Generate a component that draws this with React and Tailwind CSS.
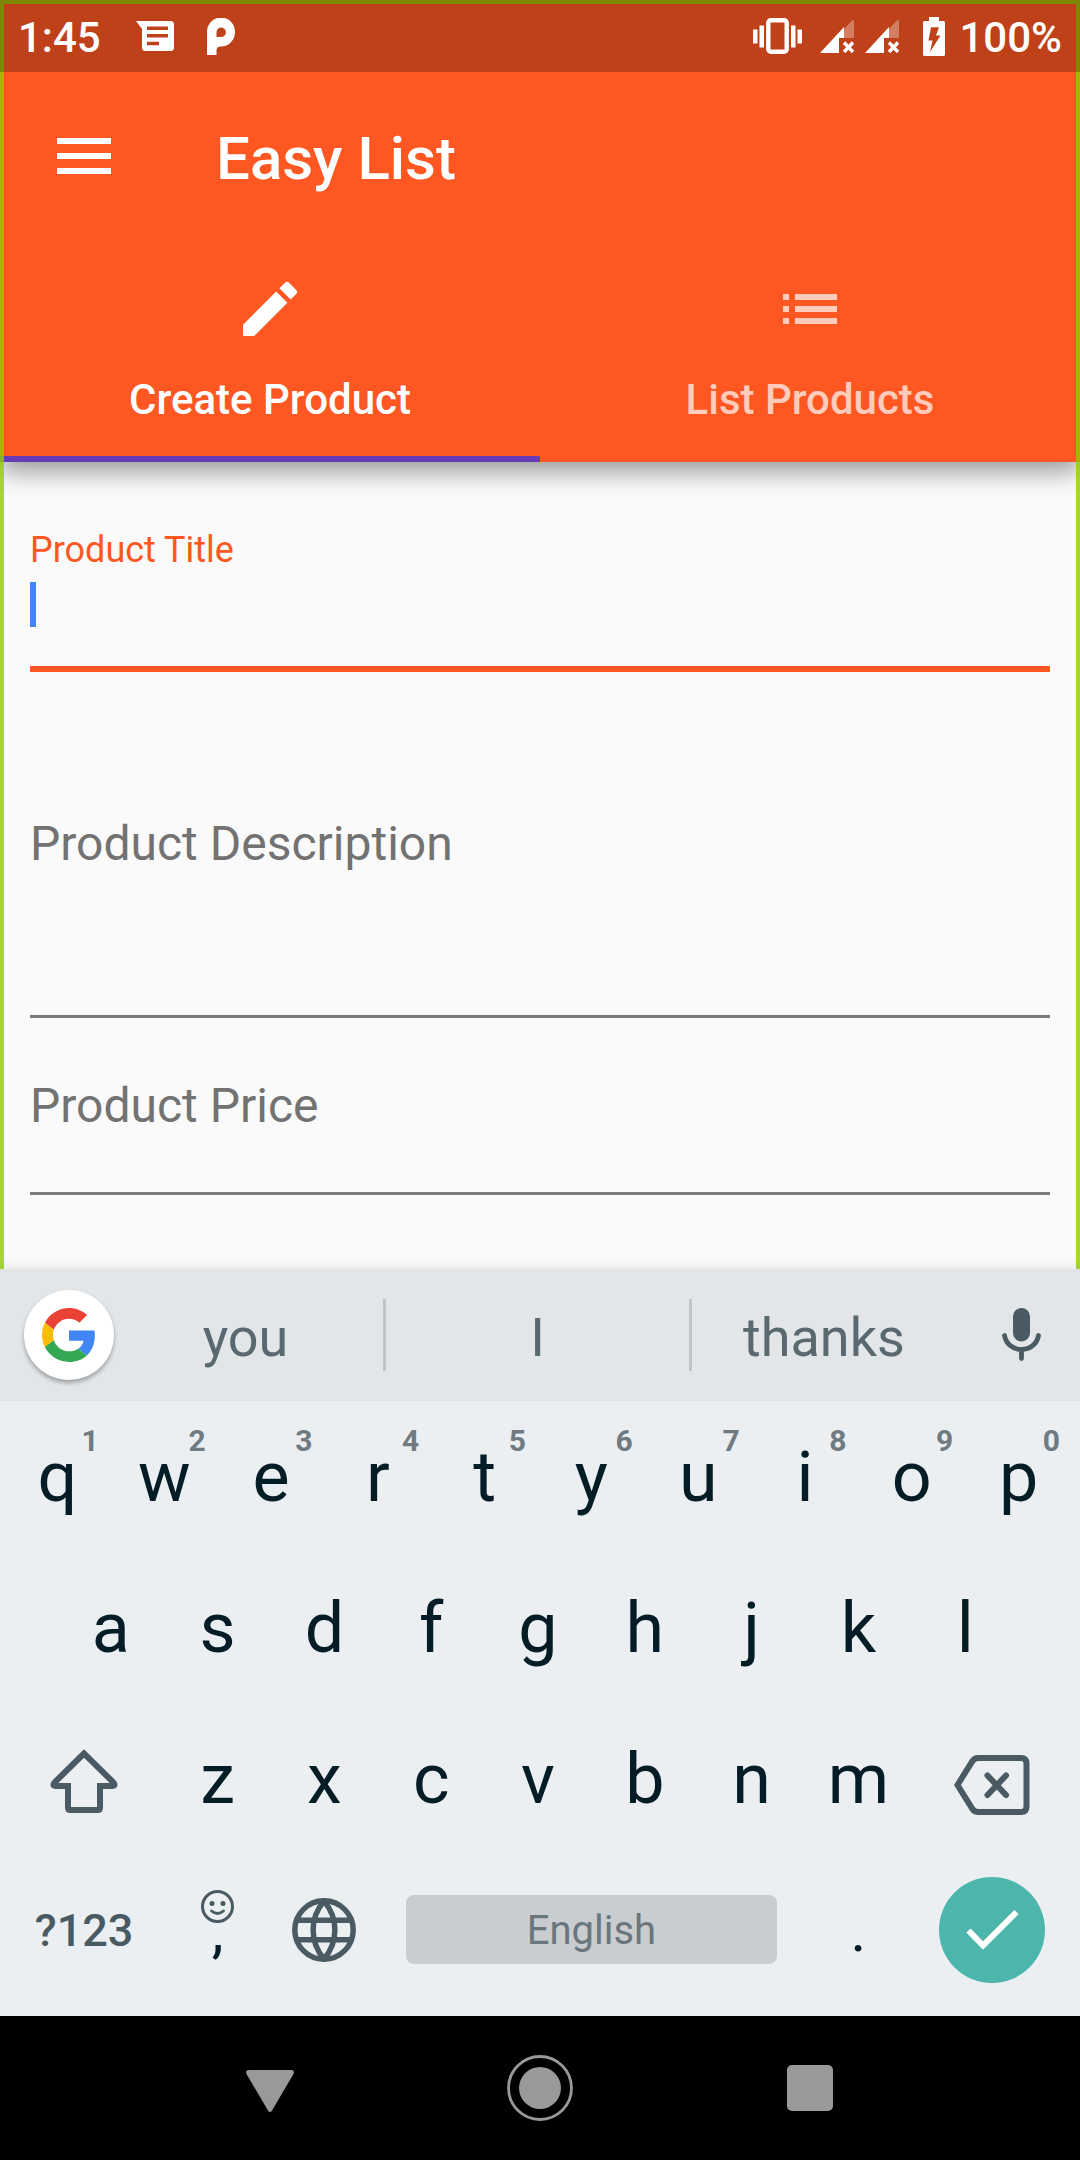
import { MdCreate, MdList, MdMenu } from "react-icons/md";

function MessageIcon() {
  return (
    <svg width="38" height="30" viewBox="0 0 38 30" aria-hidden="true">
      <path
        fill="#fff"
        fillRule="evenodd"
        d="M0 0H34.500a3.500 3.500 0 0 1 3.500 3.500V26.500a3.500 3.500 0 0 1-3.500 3.500H9.500A3.500 3.500 0 0 1 6 26.500V8ZM11 5.500V9H32V5.500ZM11 13V16.500H32V13ZM11 20.700V24.200H23V20.700Z"
      />
    </svg>
  );
}

function ParkingLogo() {
  return (
    <svg width="30" height="37" viewBox="0 0 30 37" aria-hidden="true">
      <path
        fill="#fff"
        fillRule="evenodd"
        d="M1 37V14.500A14 14.500 0 1 1 15 28.500H14a4 4 0 0 0-3.500 4V37ZM10.500 19V14a4.700 4.700 0 1 1 4.700 5Z"
      />
    </svg>
  );
}

function VibrateIcon() {
  return (
    <svg width="49" height="36" viewBox="0 0 49 36" aria-hidden="true">
      <rect x="15.300" y="2.200" width="18.400" height="31.600" rx="2.500" fill="none" stroke="#fff" strokeWidth="4.400" />
      <path fill="#fff" d="M0 11.500h4.500v14H0zM6.500 7.500h4.500v22H6.500zM38 7.500h4.500v22H38zM44.500 11.500H49v14h-4.500z" />
    </svg>
  );
}

function SignalIcon() {
  return (
    <svg width="34" height="34" viewBox="0 0 34 34" aria-hidden="true">
      <path fill="#fff" fillOpacity="0.32" d="M24 10L32 1.500Q34 0 34 2V19H24Z" />
      <path fill="#fff" d="M0 34L24 8V19H19V34Z" />
      <path stroke="#fff" strokeWidth="3.400" d="M24 23.500L33 33M33 23.500L24 33" />
    </svg>
  );
}

function BatteryIcon() {
  return (
    <svg width="22" height="39" viewBox="0 0 22 39" aria-hidden="true">
      <path
        fill="#fff"
        fillRule="evenodd"
        d="M6 0h10v4h4.500q1.500 0 1.500 1.500v32q0 1.500-1.500 1.500h-19Q0 39 0 37.500v-32Q0 4 1.500 4H6ZM8 10.300L5.500 23.500H9.500L7 35L17.500 18.500H13L16 10.300Z"
      />
    </svg>
  );
}

function GoogleLogo() {
  return (
    <svg width="54" height="54" viewBox="0 0 48 48" aria-hidden="true">
      <path fill="#EA4335" d="M24 9.5c3.54 0 6.71 1.22 9.21 3.6l6.85-6.85C35.9 2.38 30.47 0 24 0 14.62 0 6.51 5.38 2.56 13.22l7.98 6.19C12.43 13.72 17.74 9.5 24 9.5z" />
      <path fill="#4285F4" d="M46.98 24.55c0-1.57-.15-3.09-.38-4.55H24v9.02h12.94c-.58 2.96-2.26 5.48-4.78 7.18l7.73 6c4.51-4.18 7.09-10.36 7.09-17.65z" />
      <path fill="#FBBC05" d="M10.53 28.59c-.48-1.45-.76-2.99-.76-4.59s.27-3.14.76-4.59l-7.98-6.19C.92 16.46 0 20.12 0 24c0 3.88.92 7.54 2.56 10.78l7.97-6.19z" />
      <path fill="#34A853" d="M24 48c6.48 0 11.93-2.13 15.89-5.81l-7.73-6c-2.15 1.45-4.92 2.3-8.16 2.3-6.26 0-11.57-4.22-13.47-9.91l-7.98 6.19C6.51 42.62 14.62 48 24 48z" />
    </svg>
  );
}

function MicIcon() {
  return (
    <svg width="39" height="54" viewBox="0 0 39 54" aria-hidden="true">
      <rect x="11" y="0" width="17" height="33.500" rx="8.500" fill="#4a5a62" />
      <path fill="none" stroke="#4a5a62" strokeWidth="4.800" strokeLinecap="round" d="M2.500 27.500C4 36 11 41.500 19.500 41.500S35 36 36.500 27.500M19.500 42V50.500" />
    </svg>
  );
}

function ShiftIcon() {
  return (
    <svg width="68" height="70" viewBox="0 -5 68 70" aria-hidden="true">
      <path
        fill="none"
        stroke="#4a5a62"
        strokeWidth="6"
        d="M34 4.500L4.500 33.500Q1.800 37 6 37H18V58.500Q18 61 20.500 61H47.500Q50 61 50 58.500V37H62Q66.200 37 63.500 33.500Z"
      />
    </svg>
  );
}

function BackspaceIcon() {
  return (
    <svg width="76" height="72" viewBox="0 -12 76 72" aria-hidden="true">
      <path
        fill="none"
        stroke="#4a5a62"
        strokeWidth="6"
        d="M3.500 30L18.500 6Q20.500 3 24 3H67Q72.500 3 72.500 8.500V51.500Q72.500 57 67 57H24Q20.500 57 18.500 54Z"
      />
      <path stroke="#4a5a62" strokeWidth="6" strokeLinecap="round" d="M33.500 20.500L52 40M52 20.500L33.500 40" />
    </svg>
  );
}

function SmileyIcon() {
  return (
    <svg width="33" height="33" viewBox="0 0 33 33" aria-hidden="true">
      <circle cx="16.500" cy="16.500" r="15" fill="none" stroke="#4a5a62" strokeWidth="3" />
      <circle cx="11" cy="13.500" r="2.500" fill="#4a5a62" />
      <circle cx="22" cy="13.500" r="2.500" fill="#4a5a62" />
      <path fill="none" stroke="#4a5a62" strokeWidth="2.800" strokeLinecap="round" d="M10.500 21Q16.500 26 22.500 21" />
    </svg>
  );
}

function GlobeIcon() {
  return (
    <svg width="64" height="64" viewBox="0 0 64 64" aria-hidden="true">
      <g fill="none" stroke="#4a5a62" strokeWidth="5.500">
        <circle cx="32" cy="32" r="29.200" />
        <path d="M32 3C17.500 20 17.500 44 32 61C46.500 44 46.500 20 32 3ZM5 22.300H59M5 41.700H59" />
      </g>
    </svg>
  );
}

function DoneIcon() {
  return (
    <svg width="54" height="42" viewBox="0 0 54 42" aria-hidden="true">
      <path fill="none" stroke="#fff" strokeWidth="6" d="M3.500 21.500L18 36.500L51.500 3" />
    </svg>
  );
}

function StatusBar() {
  return (
    <div className="relative z-30 flex h-[72px] items-center justify-between bg-black/25 pr-[18px] pl-[18px] text-[42px] leading-[48px] font-medium text-white">
      <div className="flex items-center">
        <span className="pt-[3px]">1:45</span>
        <span className="ml-[35px]"><MessageIcon /></span>
        <span className="ml-8"><ParkingLogo /></span>
      </div>
      <div className="flex items-center">
        <VibrateIcon />
        <span className="ml-[18px]"><SignalIcon /></span>
        <span className="ml-[11px]"><SignalIcon /></span>
        <span className="ml-6"><BatteryIcon /></span>
        <span className="ml-[14px] pt-[3px]">100%</span>
      </div>
    </div>
  );
}

function Tab({ icon: Icon, label, active }) {
  return (
    <button
      type="button"
      role="tab"
      aria-selected={active}
      className={
        active
          ? "flex h-[222px] flex-1 flex-col items-center border-b-[6px] border-[#673ab7] pt-[33px] text-white"
          : "flex h-[222px] flex-1 flex-col items-center border-b-[6px] border-transparent pt-[33px] text-[#ffccbc]"
      }
    >
      <Icon size={72} aria-hidden="true" />
      <span className="mt-[30px] text-[42px] leading-[50px] font-medium">{label}</span>
    </button>
  );
}

function AppHeader() {
  return (
    <header className="relative bg-[#ff5722] shadow-[0_9px_24px_rgba(0,0,0,0.4)]">
      <StatusBar />
      <div className="flex h-[168px] items-center px-12 text-white">
        <button type="button" aria-label="Open navigation menu">
          <MdMenu size={72} aria-hidden="true" />
        </button>
        <h1 className="ml-24 pt-1.5 text-[60px] leading-[72px] font-medium">Easy List</h1>
      </div>
      <div role="tablist" className="flex">
        <Tab icon={MdCreate} label="Create Product" active={true} />
        <Tab icon={MdList} label="List Products" active={false} />
      </div>
    </header>
  );
}

function ProductForm() {
  return (
    <form className="flex flex-1 flex-col bg-[#fafafa] px-[30px] pt-[30px]">
      <div className="relative flex flex-col pt-9">
        <label htmlFor="title" className="text-4xl leading-[44px] text-[#ff5722]">
          Product Title
        </label>
        <input
          id="title"
          type="text"
          className="mt-2.5 h-[90px] w-full rounded-none border-b-[6px] border-[#ff5722] bg-transparent pb-7 text-5xl leading-[56px] caret-transparent outline-none"
        />
        <span className="absolute bottom-[45px] left-0 h-[45px] w-[6px] bg-[#4285f4]" />
      </div>
      <textarea
        aria-label="Product Description"
        placeholder="Product Description"
        className="block h-[346px] w-full resize-none overflow-hidden rounded-none border-b-[3px] border-[#7c7c7c] bg-transparent pt-36 text-5xl leading-[56px] outline-none placeholder:text-[#727272]"
      />
      <input
        type="text"
        aria-label="Product Price"
        placeholder="Product Price"
        className="h-[177px] w-full rounded-none border-b-[3px] border-[#7c7c7c] bg-transparent text-5xl leading-[56px] outline-none placeholder:text-[#727272]"
      />
    </form>
  );
}

function LetterKey({ letter, hint }) {
  return (
    <button type="button" className="relative col-span-2 flex items-center justify-center text-[70px] leading-[82px] text-[#041c26]">
      {letter}
      {hint && (
        <span className="absolute top-[22px] right-3 text-3xl leading-9 font-bold text-[#6f7b81]">{hint}</span>
      )}
    </button>
  );
}

function KeyRow({ children }) {
  return <div className="grid h-[151px] grid-cols-20 pr-2 pl-1">{children}</div>;
}

function Suggestions() {
  return (
    <div className="flex h-[132px] items-center bg-[#e2e6e9] text-[54px] leading-[64px] text-[#5a686f]">
      <div className="flex w-[108px] justify-end">
        <button type="button" aria-label="Google search" className="-mr-1.5 flex size-[90px] shrink-0 items-center justify-center rounded-full bg-white shadow-[0_3px_4px_rgba(0,0,0,0.3)]">
          <GoogleLogo />
        </button>
      </div>
      <button type="button" className="flex-[275] pt-1.5">you</button>
      <span className="h-[72px] w-[3px] bg-[#c1c5c8]" />
      <button type="button" className="flex-[303] pt-1.5">I</button>
      <span className="h-[72px] w-[3px] bg-[#c1c5c8]" />
      <button type="button" className="flex-[264] pt-1.5">thanks</button>
      <div className="flex w-[124px] justify-end pr-[39px]">
        <button type="button" aria-label="Voice input">
          <MicIcon />
        </button>
      </div>
    </div>
  );
}

function Keyboard() {
  return (
    <section aria-label="Keyboard" className="relative z-30 bg-[#ebeff2] pb-[11px] shadow-[0_0_12px_rgba(0,0,0,0.12)]">
      <Suggestions />
      <KeyRow>
        {[..."qwertyuiop"].map((letter, i) => (
          <LetterKey key={letter} letter={letter} hint={"1234567890"[i]} />
        ))}
      </KeyRow>
      <KeyRow>
        <span />
        {[..."asdfghjkl"].map((letter) => (
          <LetterKey key={letter} letter={letter} />
        ))}
      </KeyRow>
      <KeyRow>
        <button type="button" aria-label="Shift" className="col-span-3 flex items-center justify-center">
          <ShiftIcon />
        </button>
        {[..."zxcvbnm"].map((letter) => (
          <LetterKey key={letter} letter={letter} />
        ))}
        <button type="button" aria-label="Backspace" className="col-span-3 flex items-center justify-center">
          <BackspaceIcon />
        </button>
      </KeyRow>
      <KeyRow>
        <button type="button" className="col-span-3 flex items-center justify-center pt-0.5 text-[45px] leading-[54px] font-medium text-[#4a5a62]">
          ?123
        </button>
        <button type="button" className="relative col-span-2 flex items-center justify-center pt-0.5 text-[60px] leading-[72px] text-[#041c26]">
          <span className="absolute top-9"><SmileyIcon /></span>
          ,
        </button>
        <button type="button" aria-label="Change language" className="col-span-2 flex items-center justify-center">
          <GlobeIcon />
        </button>
        <div className="col-span-8 flex items-center px-7">
          <button type="button" className="h-[69px] w-full rounded-lg bg-[#c9cdd0] pt-0.5 text-[40px] leading-[48px] text-[#6b767c]">
            English
          </button>
        </div>
        <button type="button" className="col-span-2 flex items-center justify-center pt-0.5 text-[60px] leading-[72px] text-[#041c26]">
          .
        </button>
        <div className="col-span-3 flex items-center justify-center">
          <button type="button" aria-label="Done" className="flex size-[106px] items-center justify-center rounded-full bg-[#4db6ac]">
            <DoneIcon />
          </button>
        </div>
      </KeyRow>
    </section>
  );
}

function SystemNav() {
  return (
    <nav aria-label="System" className="relative z-30 grid h-36 grid-cols-3 bg-black px-[12.5%]">
      <button type="button" aria-label="Back" className="flex items-center justify-center pt-1.5">
        <svg width="48" height="42" viewBox="0 0 48 42" aria-hidden="true">
          <path fill="#999" d="M3 0H45Q49 0 47.500 4L26 40.500Q24 43.500 22 40.500L.500 4Q-1 0 3 0Z" />
        </svg>
      </button>
      <button type="button" aria-label="Home" className="flex items-center justify-center">
        <svg width="66" height="66" viewBox="0 0 66 66" aria-hidden="true">
          <circle cx="33" cy="33" r="31.500" fill="none" stroke="#999" strokeWidth="2.800" />
          <circle cx="33" cy="33" r="21" fill="#999" />
        </svg>
      </button>
      <button type="button" aria-label="Recent apps" className="flex items-center justify-center">
        <span className="size-[46px] rounded-[5px] bg-[#999]" />
      </button>
    </nav>
  );
}

export default function App() {
  return (
    <div className="flex min-h-screen flex-col font-['Roboto',sans-serif]">
      <main className="relative flex flex-1 flex-col">
        <AppHeader />
        <ProductForm />
        <div className="pointer-events-none absolute inset-0 z-20 border-x-4 border-t-4 border-[#92cd00]/80" />
      </main>
      <Keyboard />
      <SystemNav />
    </div>
  );
}
